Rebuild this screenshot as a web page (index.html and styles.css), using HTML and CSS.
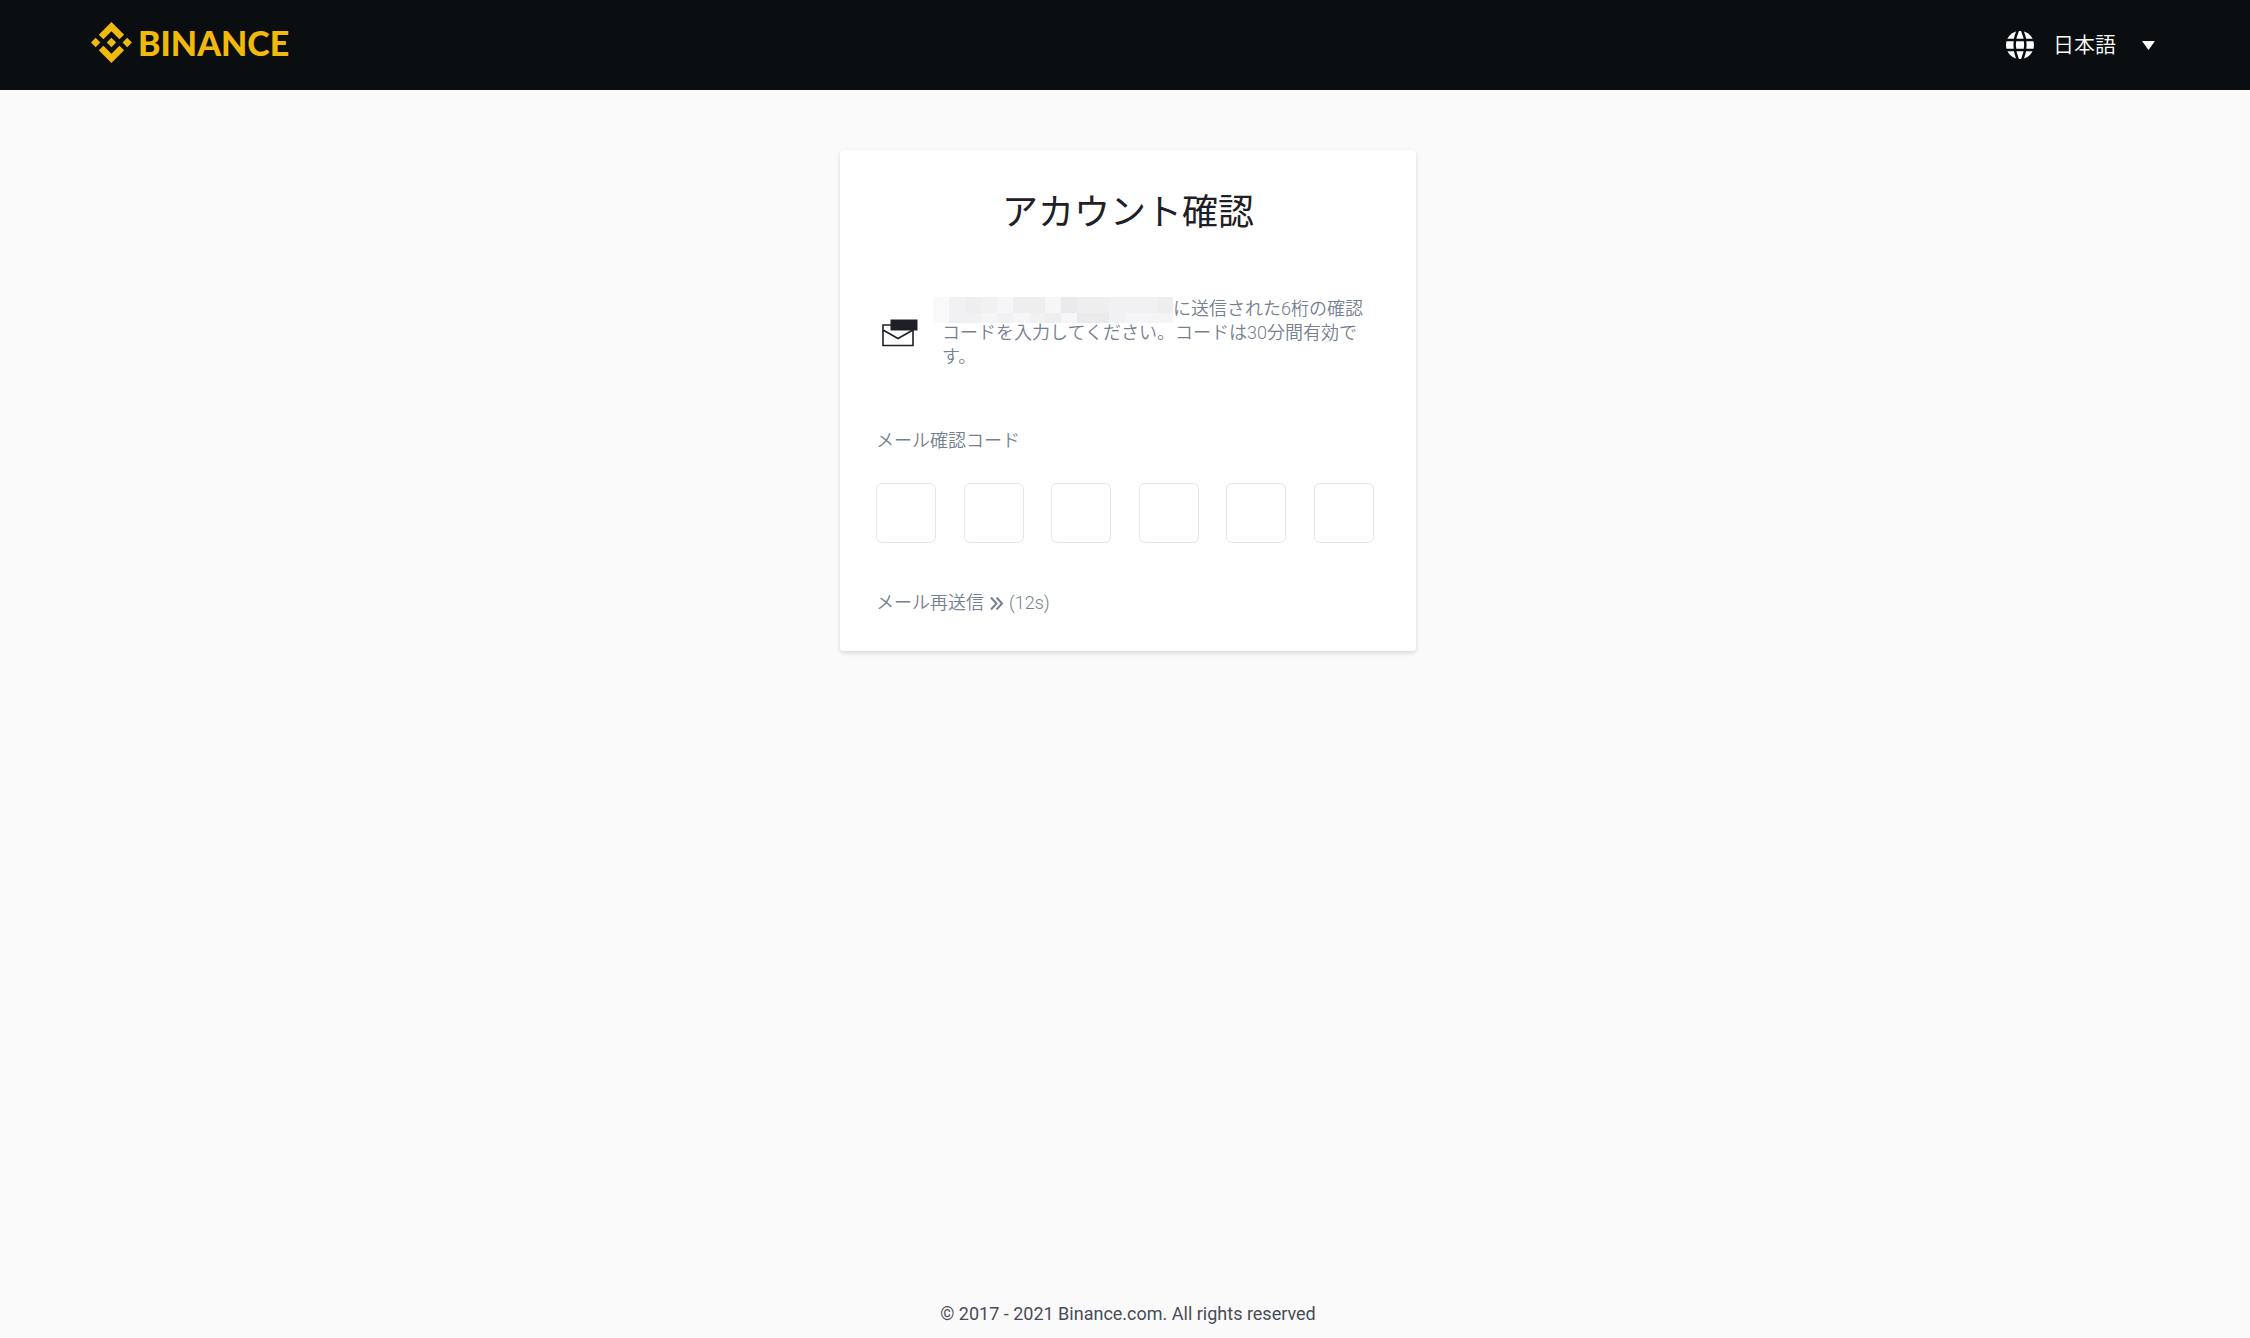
FILE: index.html
```html
<!DOCTYPE html>
<html lang="ja">
<head>
	<meta charset="UTF-8">
	<title>アカウント確認</title>
	<link rel="stylesheet" href="styles.css">
</head>
<body>
<header class="header">
	<a class="logo" href="#">
		<svg class="logo-mark" viewBox="0 0 126 126" aria-hidden="true">
			<path d="M38.2 53.2 62.8 28.6l24.6 24.6 14.3-14.3L62.8 0 23.9 38.9zM0 63l14.3-14.3L28.6 63 14.3 77.3zM38.2 72.8l24.6 24.6 24.6-24.6 14.3 14.3L62.8 126 23.9 87.1zM97 63l14.3-14.3L125.6 63l-14.3 14.3zM77.3 63 62.8 48.5 48.3 63l14.5 14.5z"/>
		</svg>
		<span>BINANCE</span>
	</a>
	<button class="lang" type="button">
		<svg class="globe" viewBox="0 0 28 28" aria-hidden="true">
			<circle cx="14" cy="14" r="14" fill="#fff"/>
			<path d="M0 9h28M0 19h28M12 -1C7.500 8 7.500 20 12 29M16 -1c4.500 9 4.500 21 0 30" fill="none" stroke="#0b0e11" stroke-width="2.500"/>
		</svg>
		<span>日本語</span>
		<svg class="caret" viewBox="0 0 13 9" aria-hidden="true"><path d="M0 0h13L6.500 9z"/></svg>
	</button>
</header>

<main class="main">
	<form class="card">
		<h1>アカウント確認</h1>
		<div class="notice">
			<svg class="mail" viewBox="0 0 36 28" aria-hidden="true">
				<path d="M1 6h30v20.500H1zM1 11l15 8.500 15-8.500" fill="none" stroke="#1e2026" stroke-width="1.600"/>
				<path d="M8.500 0.500h27v11h-27z" fill="#1e2026"/>
			</svg>
			<p><svg class="mask" viewBox="0 0 240 26" shape-rendering="crispEdges" aria-hidden="true">
				<path fill="#f9f9f9" d="M0 0h16v26H0z"/>
				<path fill="#f1f1f3" d="M16 0h224v26H16z"/>
				<path fill="#eeeeef" d="M32 0h16v16H32zM80 0h32v16H80zM144 0h32v16h-32zM112 16h16v10h-16zM224 0h16v16h-16z"/>
				<path fill="#f6f6f8" d="M64 0h16v16H64zM112 0h16v16h-16zM80 16h16v10H80zM128 16h16v10h-16z"/>
				<path fill="#eaeaec" d="M128 0h16v16h-16zM144 16h16v10h-16zM160 16h16v10h-16z"/>
				<path fill="#f5f5f5" d="M48 16h16v10H48zM192 16h48v10h-48z"/>
			</svg>に送信された6桁の確認コードを入力してください。コードは30分間有効です。</p>
		</div>
		<label class="label" for="code1">メール確認コード</label>
		<div class="code">
			<input id="code1" type="text" maxlength="1">
			<input type="text" maxlength="1" aria-label="メール確認コード 2">
			<input type="text" maxlength="1" aria-label="メール確認コード 3">
			<input type="text" maxlength="1" aria-label="メール確認コード 4">
			<input type="text" maxlength="1" aria-label="メール確認コード 5">
			<input type="text" maxlength="1" aria-label="メール確認コード 6">
		</div>
		<button class="resend" type="button">
			<span>メール再送信</span>
			<svg class="more" viewBox="0 0 13 13" aria-hidden="true"><path d="M1 0.500l5.500 6L1 12.500M6.500 0.500l5.500 6-5.500 6"/></svg>
			<span>(12s)</span>
		</button>
	</form>
</main>

<footer class="footer">© 2017 - 2021 Binance.com. All rights reserved</footer>
</body>
</html>
```
FILE: styles.css
```css
* {
	margin: 0;
	padding: 0;
	box-sizing: border-box;
}
body {
	min-height: 100vh;
	display: flex;
	flex-direction: column;
	background: #fafafa;
	color: #76808f;
	font: 350 18px/24px Roboto, "Noto Sans CJK JP", sans-serif;
}
button {
	border: 0;
	background: none;
	color: inherit;
	font: inherit;
	cursor: pointer;
}
.header {
	height: 90px;
	padding: 0 95px 0 91px;
	display: flex;
	justify-content: space-between;
	align-items: center;
	background: #0b0e11;
}
.logo {
	display: flex;
	align-items: center;
	gap: 6px;
	padding-bottom: 5px;
	color: #f0b90b;
	font: 900 34px/40px Lato, sans-serif;
	text-decoration: none;
}
.logo-mark {
	width: 41px;
	height: 41px;
	fill: #f0b90b;
}
.lang {
	display: flex;
	align-items: center;
	color: #fff;
	font-size: 21px;
}
.globe {
	width: 28px;
	height: 28px;
	margin-right: 19px;
}
.caret {
	width: 13px;
	height: 9px;
	margin-left: 26px;
	fill: #fff;
}
.main {
	flex: 1;
	padding: 60px 0 60px 6px;
}
.card {
	width: 100%;
	max-width: 576px;
	margin: 0 auto;
	padding: 36px 42px 36px 36px;
	background: #fff;
	border-radius: 4px;
	box-shadow: 0 2px 5px rgba(0, 0, 0, .14);
}
.card h1 {
	color: #1e2026;
	font-size: 36px;
	font-weight: 400;
	line-height: 54px;
	text-align: center;
	padding-left: 6px;
}
.notice {
	display: flex;
	align-items: center;
	gap: 24px;
	margin: 57px 0 60px;
	padding-left: 6px;
}
.notice p {
	flex: 1;
}
.mail {
	flex: none;
	width: 36px;
	height: 28px;
}
/* hidden mail address */
.mask {
	display: inline-block;
	width: 240px;
	height: 26px;
	margin: -6px 0 -6px -9px;
	vertical-align: middle;
}
.label {
	display: block;
}
.code {
	display: flex;
	justify-content: space-between;
	margin: 30px 0 48px;
}
.code input {
	width: 60px;
	height: 60px;
	border: 1px solid #e6e6e6;
	border-radius: 6px;
	background: #fff;
	color: #1e2026;
	font: inherit;
	font-size: 24px;
	text-align: center;
}
.resend {
	display: flex;
	align-items: center;
	gap: 6px;
}
.more {
	width: 13px;
	height: 13px;
	fill: none;
	stroke: #76808f;
	stroke-width: 2;
}
.footer {
	padding: 0 0 12px 6px;
	color: #474d57;
	font-weight: 400;
	text-align: center;
}
```
